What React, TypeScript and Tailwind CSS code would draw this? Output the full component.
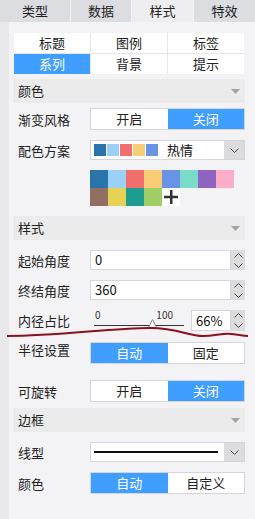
import React from "react";

const BLUE = "bg-[#409eff]";

function Tri() {
  return (
    <svg width="9" height="5" viewBox="0 0 9 5">
      <polygon points="0,0 9,0 4.5,5" fill="#a3a3a6" />
    </svg>
  );
}

function Chevron({ up = false }: { up?: boolean }) {
  return (
    <svg width="9" height="5" viewBox="0 0 9 5">
      <polyline
        points={up ? "0.5,4.5 4.5,0.5 8.5,4.5" : "0.5,0.5 4.5,4.5 8.5,0.5"}
        fill="none"
        stroke="#4a4a4a"
        strokeWidth="1"
      />
    </svg>
  );
}

function Header({ title, className }: { title: string; className: string }) {
  return (
    <div
      className={`h-[24px] w-[232px] bg-[#ebebeb] flex items-center justify-between pl-[5px] pr-[5px] text-[13px] text-[#222] ${className}`}
    >
      <span>{title}</span>
      <Tri />
    </div>
  );
}

function Label({ children }: { children: React.ReactNode }) {
  return <div className="w-[77px] pl-[5px] text-[13px] leading-[13px] text-[#222]">{children}</div>;
}

function Toggle({ left, right, active }: { left: string; right: string; active: 0 | 1 }) {
  return (
    <div className="flex w-[155px] h-[22px] border border-[#d5d6d9] bg-white text-[13px]">
      <div className={`flex-1 flex items-center justify-center ${active === 0 ? `${BLUE} text-white` : "text-[#222]"}`}>
        {left}
      </div>
      <div className={`flex-1 flex items-center justify-center ${active === 1 ? `${BLUE} text-white` : "text-[#222]"}`}>
        {right}
      </div>
    </div>
  );
}

function Spinner({ h }: { h: string }) {
  return (
    <div className={`w-[14px] ${h} bg-[#dcdcdf] flex flex-col items-center justify-center gap-[5px]`}>
      <Chevron up />
      <Chevron />
    </div>
  );
}

function NumInput({ value }: { value: string }) {
  return (
    <div className="flex w-[155px] h-[20px]">
      <div className="w-[141px] h-full bg-white border border-[#d5d6d9] flex items-center pl-[4px] text-[13px] text-[#111]">
        {value}
      </div>
      <Spinner h="h-[20px]" />
    </div>
  );
}

const row1 = ["#2874ab", "#9bd1f6", "#f06e6c", "#f9cd76", "#6994e5", "#7adbc8", "#8f63c2", "#fcaec9"];
const row2 = ["#936e62", "#e6d356", "#1f9c90", "#9fce67"];

export default function App() {
  return (
    <div className="w-[255px] h-[519px] bg-[#f3f3f5] font-['Noto_Sans_CJK_SC',sans-serif] relative overflow-hidden">
      {/* Tabs */}
      <div className="flex h-[22px] gap-px bg-[#f3f3f5] text-[13px] text-[#222]">
        <div className="w-[70px] bg-[#dcdde0] flex items-center justify-center">类型</div>
        <div className="w-[60px] bg-[#dcdde0] flex items-center justify-center">数据</div>
        <div className="w-[61px] bg-[#eeeef1] flex items-center justify-center">样式</div>
        <div className="flex-1 bg-[#dcdde0] flex items-center justify-center">特效</div>
      </div>
      <div className="flex h-[497px]">
        <div className="w-[9px] bg-[#e8e8ea]" />
        <div className="flex-1 pl-[4px] pt-[11px] flex flex-col items-start">
          {/* sub tabs */}
          <div className="ml-px grid grid-cols-3 gap-px bg-[#e6e6e8] w-[230px] text-[13px] text-[#222]">
            {["标题", "图例", "标签", "系列", "背景", "提示"].map((t, i) => (
              <div
                key={t}
                className={`h-[20px] flex items-center justify-center ${i === 3 ? `${BLUE} text-white` : "bg-white"}`}
              >
                {t}
              </div>
            ))}
          </div>

          <Header title="颜色" className="mt-[5px]" />

          <div className="mt-[5px] flex items-center">
            <Label>渐变风格</Label>
            <Toggle left="开启" right="关闭" active={1} />
          </div>

          <div className="mt-[10px] flex items-center">
            <Label>配色方案</Label>
            <div className="flex w-[155px] h-[20px] border border-[#d5d6d9] bg-white">
              <div className="flex items-center gap-px pl-[3px]">
                {row1.slice(0, 5).map((c) => (
                  <div key={c} className="w-[12px] h-[12px]" style={{ backgroundColor: c }} />
                ))}
              </div>
              <div className="flex-1 flex items-center pl-[9px] text-[13px] text-[#111]">热情</div>
              <div className="w-[20px] h-full bg-[#dcdcdf] flex items-center justify-center">
                <Chevron />
              </div>
            </div>
          </div>

          <div className="mt-[10px] ml-[77px] flex flex-col">
            <div className="flex">
              {row1.map((c) => (
                <div key={c} className="w-[18px] h-[18px]" style={{ backgroundColor: c }} />
              ))}
            </div>
            <div className="flex">
              {row2.map((c) => (
                <div key={c} className="w-[18px] h-[18px]" style={{ backgroundColor: c }} />
              ))}
              <div className="w-[18px] h-[18px] bg-white flex items-center justify-center">
                <svg width="14" height="14" viewBox="0 0 14 14">
                  <rect x="6" y="0" width="2.5" height="14" fill="#333" />
                  <rect x="0" y="5.75" width="14" height="2.5" fill="#333" />
                </svg>
              </div>
            </div>
          </div>

          <Header title="样式" className="mt-[10px]" />

          <div className="mt-[10px] flex items-center">
            <Label>起始角度</Label>
            <NumInput value="0" />
          </div>
          <div className="mt-[10px] flex items-center">
            <Label>终结角度</Label>
            <NumInput value="360" />
          </div>

          <div className="mt-[10px] flex items-center">
            <Label>内径占比</Label>
            <div className="flex w-[155px] h-[21px]">
              <div className="w-[101px] h-full flex flex-col pl-[4px] pr-[7px]">
                <div className="flex justify-between text-[10px] leading-[10px] text-[#333] pl-px pr-[11px]">
                  <span>0</span>
                  <span>100</span>
                </div>
                <div className="relative mt-[5px] h-px bg-[#333]">
                  <svg className="absolute left-[54px] top-[-6px]" width="9" height="9" viewBox="0 0 9 9">
                    <polygon points="4.5,0.5 8.5,8.5 0.5,8.5" fill="#fff" stroke="#888" strokeWidth="1" />
                  </svg>
                </div>
              </div>
              <div className="w-[40px] h-full bg-white border border-[#d5d6d9] flex items-center pl-[4px] text-[13px] text-[#111]">
                66%
              </div>
              <Spinner h="h-[21px]" />
            </div>
          </div>

          <div className="mt-[11px] flex items-start">
            <div className="pt-[1px]">
              <Label>半径设置</Label>
            </div>
            <Toggle left="自动" right="固定" active={0} />
          </div>

          <div className="mt-[16px] flex items-center">
            <Label>可旋转</Label>
            <Toggle left="开启" right="关闭" active={1} />
          </div>

          <Header title="边框" className="mt-[6px]" />

          <div className="mt-[10px] flex items-center">
            <Label>线型</Label>
            <div className="flex w-[155px] h-[20px] border border-[#d5d6d9] bg-white">
              <div className="flex-1 flex items-center pl-[3px] pr-[6px]">
                <div className="w-full h-[2px] bg-[#111]" />
              </div>
              <div className="w-[20px] h-full bg-[#dcdcdf] flex items-center justify-center">
                <Chevron />
              </div>
            </div>
          </div>

          <div className="mt-[10px] flex items-center">
            <Label>颜色</Label>
            <Toggle left="自动" right="自定义" active={0} />
          </div>
        </div>
      </div>

      {/* red annotation stroke */}
      <svg className="absolute left-0 top-0 pointer-events-none" width="255" height="519" viewBox="0 0 255 519">
        <path
          d="M7 336 C 60 336, 110 328, 150 328 C 178 328, 188 336, 203 336 C 215 336, 222 333, 232 334 C 240 335, 244 336, 248 336"
          fill="none"
          stroke="#8b1020"
          strokeWidth="2"
        />
      </svg>
    </div>
  );
}
